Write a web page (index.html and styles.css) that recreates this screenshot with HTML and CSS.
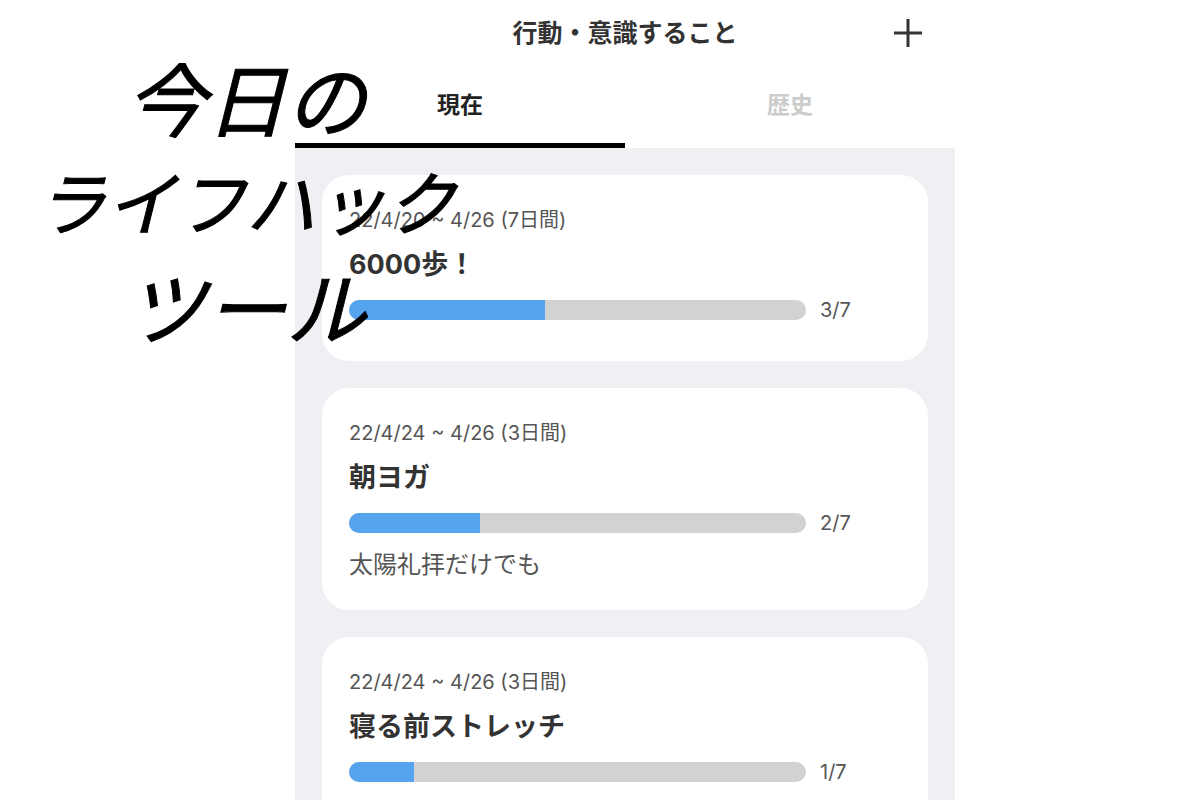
FILE: index.html
```html
<!DOCTYPE html>
<html lang="ja">
<head>
    <meta charset="UTF-8">
    <meta name="viewport" content="width=device-width, initial-scale=1.0">
    <title>行動・意識すること</title>
    <link rel="stylesheet" href="styles.css">
</head>
<body>
    <div class="page">
        <h2 class="headline">
            <span class="large">今日の</span>
            <span>ライフハック</span>
            <span class="large">ツール</span>
        </h2>

        <main class="app">
            <header class="app-header">
                <h1>行動・意識すること</h1>
                <button type="button" class="add-btn" aria-label="追加">
                    <svg width="30" height="30" viewBox="0 0 30 30" fill="none" stroke="currentColor" stroke-width="3">
                        <path d="M15 1v28M1 15h28"/>
                    </svg>
                </button>
            </header>

            <nav class="tabs">
                <button type="button" class="tab active">現在</button>
                <button type="button" class="tab">歴史</button>
            </nav>

            <div class="card-list">
                <article class="card">
                    <p class="date">22/4/20 ~ 4/26 (7日間)</p>
                    <h3><label for="walk">6000歩！</label></h3>
                    <div class="progress-row">
                        <progress id="walk" value="3" max="7"></progress>
                        <span class="count">3/7</span>
                    </div>
                </article>

                <article class="card">
                    <p class="date">22/4/24 ~ 4/26 (3日間)</p>
                    <h3><label for="yoga">朝ヨガ</label></h3>
                    <div class="progress-row">
                        <progress id="yoga" value="2" max="7"></progress>
                        <span class="count">2/7</span>
                    </div>
                    <p class="note">太陽礼拝だけでも</p>
                </article>

                <article class="card">
                    <p class="date">22/4/24 ~ 4/26 (3日間)</p>
                    <h3><label for="stretch">寝る前ストレッチ</label></h3>
                    <div class="progress-row">
                        <progress id="stretch" value="1" max="7"></progress>
                        <span class="count">1/7</span>
                    </div>
                </article>
            </div>
        </main>
    </div>
</body>
</html>
```

FILE: styles.css
```css
* {
    margin: 0;
    padding: 0;
    box-sizing: border-box;
}

body {
    font-family: Inter, "Noto Sans CJK JP", sans-serif;
    background: #fff;
    color: #333;
}

.page {
    position: relative;
    display: grid;
    grid-template-columns: 59fr 132fr 49fr;
    height: 100vh;
    overflow: hidden;
}

/* lettering laid over the app */
.headline {
    position: absolute;
    top: 44px;
    left: 36px;
    z-index: 1;
    font-family: "Noto Sans CJK JP", sans-serif;
    font-size: 70px;
    line-height: 104px;
    font-weight: 400;
    font-style: italic;
    text-align: center;
    color: #000;
    -webkit-text-stroke: 1px #000;
    pointer-events: none;
}

.headline span {
    display: block;
}

.headline .large {
    font-size: 80px;
}

.app {
    grid-column: 2;
    display: flex;
    flex-direction: column;
    min-height: 0;
}

.app-header {
    display: grid;
    grid-template-columns: 1fr auto 1fr;
    align-items: center;
    height: 66px;
    padding: 0 32px;
    flex-shrink: 0;
}

h1 {
    grid-column: 2;
    font-size: 25px;
    line-height: 36px;
    font-weight: 700;
}

.add-btn {
    justify-self: end;
    display: flex;
    border: none;
    background: none;
    color: #333;
    cursor: pointer;
}

.tabs {
    display: flex;
    flex-shrink: 0;
}

.tab {
    flex: 1;
    height: 82px;
    padding-bottom: 4px;
    border: none;
    border-bottom: 5px solid transparent;
    background: none;
    font-family: inherit;
    font-size: 23px;
    font-weight: 700;
    color: #ccc;
    cursor: pointer;
}

.tab.active {
    border-bottom-color: #000;
    color: #222;
}

.card-list {
    flex: 1;
    display: flex;
    flex-direction: column;
    gap: 27px;
    min-height: 0;
    padding: 27px;
    overflow: hidden;
    background: #eff0f4;
}

.card {
    flex-shrink: 0;
    padding: 27px;
    border-radius: 27px;
    background: #fff;
}

.date {
    font-size: 20px;
    line-height: 37px;
    color: #555;
}

h3 {
    font-size: 27px;
    line-height: 52px;
    font-weight: 700;
}

.progress-row {
    display: flex;
    align-items: center;
    gap: 14px;
    height: 37px;
    margin-bottom: 6px;
}

progress {
    appearance: none;
    flex: 1;
    min-width: 0;
    height: 20px;
    border: none;
    border-radius: 10px;
    overflow: hidden;
    background: #d2d2d2;
}

progress::-webkit-progress-bar {
    background: #d2d2d2;
}

progress::-webkit-progress-value {
    background: #57a4ee;
}

.count {
    flex: 0 0 81px;
    font-size: 20px;
    color: #555;
}

.note {
    font-size: 24px;
    line-height: 36px;
    color: #555;
}
```
